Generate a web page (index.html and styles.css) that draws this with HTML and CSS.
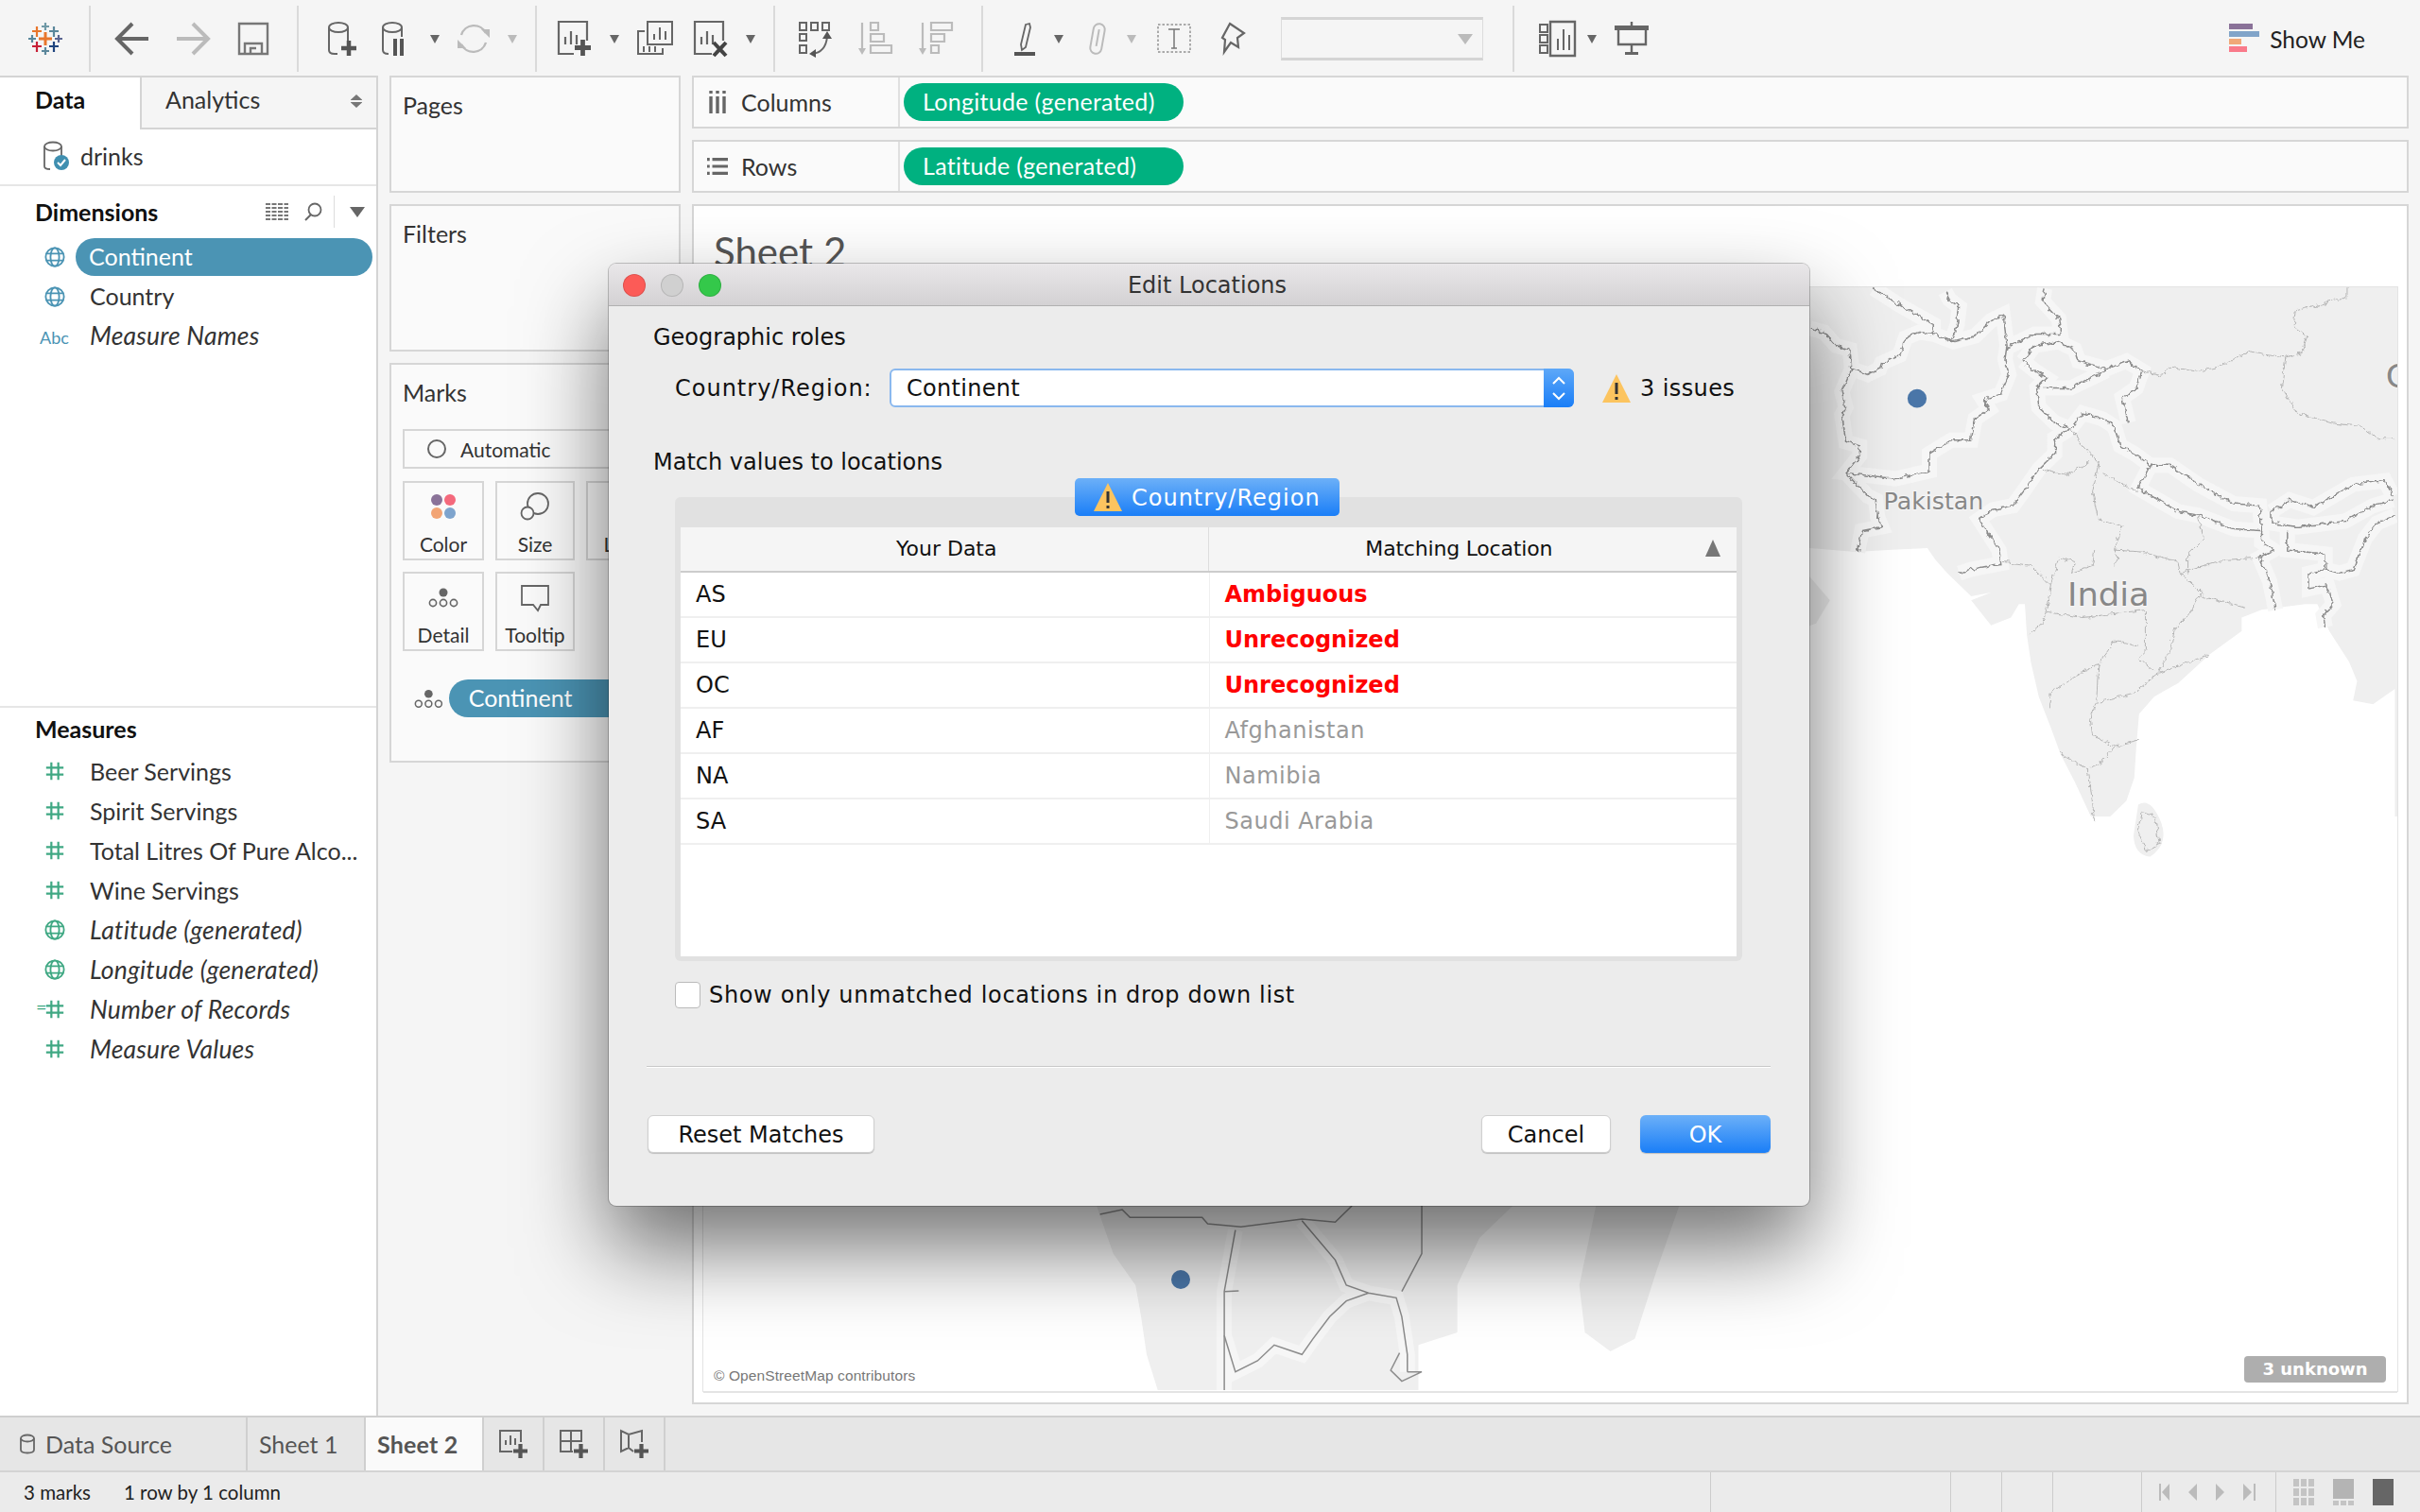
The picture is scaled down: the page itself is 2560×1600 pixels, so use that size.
FILE: index.html
```html
<!DOCTYPE html>
<html lang="en">
<head>
    <meta charset="utf-8">
    <title>Edit Locations</title>
    <link rel="stylesheet" href="styles.css">
</head>
<body>

<svg class="defs" width="0" height="0">
    <symbol id="globe" viewBox="0 0 24 24"><g fill="none" stroke="currentColor" stroke-width="2"><circle cx="12" cy="12" r="10.5"/><ellipse cx="12" cy="12" rx="5" ry="10.5"/><path d="M2 8h20M2 16h20"/></g></symbol>
    <symbol id="hash" viewBox="0 0 24 24"><path d="M8 2v20M16 2v20M2 8h20M2 16h20" fill="none" stroke="currentColor" stroke-width="2.4"/></symbol>
    <symbol id="warn" viewBox="0 0 32 32"><path d="M16 1L31 31H1z" fill="#fcc45f"/><path d="M16 10v12M16 25v3" stroke="#333" stroke-width="3" fill="none"/></symbol>
    <symbol id="detail" viewBox="0 0 32 22"><circle cx="16" cy="6" r="4.5" fill="#666"/><g fill="none" stroke="#666" stroke-width="1.6"><circle cx="5" cy="17" r="3.6"/><circle cx="16" cy="17" r="3.6"/><circle cx="27" cy="17" r="3.6"/></g></symbol>
    <symbol id="plus" viewBox="0 0 16 16"><path d="M8 0v16M0 8h16" stroke="#555" stroke-width="4.5" fill="none"/></symbol>
    <filter id="wiggle" filterUnits="userSpaceOnUse" x="-100" y="0" width="1700" height="1600">
        <feTurbulence type="fractalNoise" baseFrequency="0.07" numOctaves="2" seed="4"/>
        <feDisplacementMap in="SourceGraphic" scale="16" xChannelSelector="R" yChannelSelector="G"/>
    </filter>
</svg>

<header class="toolbar">
    <div class="tb-group g-logo">
        <svg class="icon" viewBox="0 0 40 40" fill="none" stroke-width="2.2">
            <path d="M20 13v14M13 20h14" stroke="#e8762c" stroke-width="3"/>
            <path d="M20 3v8M16 7h8" stroke="#7099a6"/>
            <path d="M11 7v11M6 12h10" stroke="#e8762c"/>
            <path d="M29 7v11M24 12h10" stroke="#5b879b"/>
            <path d="M6 16v8M2 20h8" stroke="#59879b"/>
            <path d="M34 16v8M30 20h8" stroke="#5b6591"/>
            <path d="M11 23v11M6 28h10" stroke="#c72037"/>
            <path d="M29 23v11M24 28h10" stroke="#1f447e"/>
            <path d="M20 29v8M16 33h8" stroke="#5b879b"/>
        </svg>
    </div>
    <div class="tb-group g-nav">
        <svg class="icon" viewBox="0 0 40 40"><path d="M37 20H5M20 4L4 20l16 16" fill="none" stroke="#666" stroke-width="4"/></svg>
        <svg class="icon" viewBox="0 0 40 40"><path d="M3 20h32M20 4l16 16-16 16" fill="none" stroke="#bbb" stroke-width="4"/></svg>
        <svg class="icon" viewBox="0 0 40 40"><g fill="none" stroke="#777" stroke-width="2.4"><path d="M5 4h30v32H5z"/><path d="M11 36V25h18v11M17 36v-6h6"/></g></svg>
    </div>
    <div class="tb-group g-data">
        <svg class="icon" viewBox="0 0 40 40"><g fill="none" stroke="#666" stroke-width="2"><ellipse cx="18" cy="8" rx="10" ry="5"/><path d="M8 8v24q0 4 6 4h3M28 8v16"/></g><use href="#plus" x="21" y="22" width="16" height="16"/></svg>
        <svg class="icon m3" viewBox="0 0 40 40"><g fill="none" stroke="#666" stroke-width="2"><ellipse cx="16" cy="8" rx="10" ry="5"/><path d="M6 8v24q0 4 6 4M26 8v10"/></g><path d="M19 20v18M26 20v18" stroke="#555" stroke-width="4"/></svg>
        <span class="caret"></span>
        <svg class="icon" viewBox="0 0 40 40"><g fill="none" stroke="#bbb" stroke-width="2.4"><path d="M7 16A14 14 0 0 1 33 14M33 24A14 14 0 0 1 7 26"/></g><path d="M28 10h9v9zM12 30H3v-9z" fill="#bbb"/></svg>
        <span class="caret off"></span>
    </div>
    <div class="tb-group g-sheet">
        <svg class="icon" viewBox="0 0 40 40"><g fill="none" stroke="#666" stroke-width="2.2"><path d="M20 36H4V2h30v20"/><path d="M11 26v-8M17 26V12M23 26v-10"/></g><use href="#plus" x="21" y="21" width="17" height="17"/></svg>
        <span class="caret"></span>
        <svg class="icon" viewBox="0 0 40 40"><g fill="none" stroke="#666" stroke-width="2"><path d="M12 26V2h26v24z"/><path d="M19 21v-6M25 21V8M31 21v-9"/><path d="M9 12H2v24h26v-6"/><path d="M8 34v-6M14 34v-6M20 34v-6"/></g></svg>
        <svg class="icon" viewBox="0 0 40 40"><g fill="none" stroke="#666" stroke-width="2.2"><path d="M22 36H4V2h30v20"/><path d="M11 26v-8M17 26V12M23 26v-10"/></g><path d="M24 24l13 14M37 24L24 38" stroke="#444" stroke-width="4"/></svg>
        <span class="caret"></span>
    </div>
    <div class="tb-group g-sort">
        <svg class="icon" viewBox="0 0 40 40"><g fill="none" stroke="#666" stroke-width="2"><path d="M3 3h7v8H3zM15 3h7v8h-7zM27 3h7v8h-7zM3 15h7v7H3zM3 27h7v8H3z"/><path d="M16 36c10-1 15-8 16-18"/></g><path d="M27 20l5-8 5 8zM13 36l7-5v9z" fill="#555"/></svg>
        <svg class="icon" viewBox="0 0 40 40"><g fill="none" stroke="#bbb" stroke-width="2.2"><path d="M5 3v30"/><path d="M14 3h8v8h-8zM14 15h14v8H14zM14 27h22v8H14z"/></g><path d="M1 30h8l-4 7z" fill="#bbb"/></svg>
        <svg class="icon" viewBox="0 0 40 40"><g fill="none" stroke="#bbb" stroke-width="2.2"><path d="M5 3v30"/><path d="M14 3h22v8H14zM14 15h14v8H14zM14 27h8v8h-8z"/></g><path d="M1 30h8l-4 7z" fill="#bbb"/></svg>
    </div>
    <div class="tb-group g-mark">
        <svg class="icon" viewBox="0 0 40 40"><path d="M21 5l4-1 1 4-5 21-4 3-1-6z" fill="none" stroke="#666" stroke-width="1.8"/><path d="M9 34h22v4H9z" fill="#555"/></svg>
        <span class="caret tight"></span>
        <svg class="icon m6" viewBox="0 0 40 40"><g transform="rotate(10 20 20)" fill="none" stroke="#bbb" stroke-width="2"><path d="M14 10a6 6 0 0 1 12 0v20a6 6 0 0 1-12 0z"/><path d="M20 10v18"/></g></svg>
        <span class="caret off tight"></span>
        <svg class="icon m10" viewBox="0 0 40 40"><path d="M3 5h34v29H3z" fill="none" stroke="#aaa" stroke-width="2" stroke-dasharray="2.500 2"/><path d="M14 10h12M20 10v20M17 30h6" fill="none" stroke="#777" stroke-width="1.500"/></svg>
        <svg class="icon m14" viewBox="0 0 40 40"><path d="M15 4l15 10-7 5 1 10-8-5-7 10 1-13-3-2z" fill="none" stroke="#666" stroke-width="2.2"/></svg>
        <div class="tb-select"><span class="caret off big"></span></div>
    </div>
    <div class="tb-group g-view">
        <svg class="icon" viewBox="0 0 40 40"><g fill="none" stroke="#666" stroke-width="2"><path d="M1 5h8v8H1zM1 16h8v8H1zM1 27h8v8H1z"/><path d="M12 2h26v36H12z" stroke-width="2.4"/><path d="M20 32V20M26 32V10M32 32V16"/></g></svg>
        <span class="caret tight"></span>
        <svg class="icon m17" viewBox="0 0 40 40"><path d="M2 6h36v5H2z" fill="#666"/><path d="M20 2v4M6 11v15h29V11M20 26v10" fill="none" stroke="#666" stroke-width="2.4"/><path d="M13 34h14v3H13z" fill="#666"/></svg>
        <div class="show-me">
            <div class="bars"><i class="b1"></i><i class="b2"></i><i class="b3"></i><i class="b4"></i></div>
            <span>Show Me</span>
        </div>
    </div>
</header>

<main class="main">
    <!-- left side, data pane -->
    <aside class="sidebar">
        <div class="side-tabs">
            <div class="tab-data">Data</div>
            <div class="tab-analytics">Analytics<span class="updown"></span></div>
        </div>
        <div class="source">
            <svg class="src-icon" viewBox="0 0 28 32"><g fill="none" stroke="#666" stroke-width="1.8"><ellipse cx="11" cy="6" rx="9" ry="4.5"/><path d="M2 6v21q0 3 6 3M20 6v10"/></g><circle cx="20" cy="23" r="8" fill="#3f8fb0"/><path d="M16 23l3 3 5-6" fill="none" stroke="#fff" stroke-width="2"/></svg>
            drinks
        </div>
        <section class="dims">
            <div class="side-head">
                <span>Dimensions</span>
                <div class="head-tools">
                    <svg width="24" height="18" viewBox="0 0 24 18"><path d="M0 1h24M0 5h24M0 9h24M0 13h24M0 17h24" stroke="#777" stroke-width="2" stroke-dasharray="5 1.5"/></svg>
                    <svg width="20" height="20" viewBox="0 0 20 20"><circle cx="12" cy="8" r="6.5" fill="none" stroke="#666" stroke-width="1.8"/><path d="M8 13l-6 6" stroke="#666" stroke-width="2"/></svg>
                    <span class="head-sep"></span>
                    <span class="caret big"></span>
                </div>
            </div>
            <div class="field dim"><svg class="f-icon"><use href="#globe"/></svg><span class="pill-sel">Continent</span></div>
            <div class="field dim"><svg class="f-icon"><use href="#globe"/></svg><span>Country</span></div>
            <div class="field dim"><span class="abc">Abc</span><em>Measure Names</em></div>
        </section>
        <section class="measures">
            <div class="side-head short">Measures</div>
            <div class="field mea"><svg class="f-icon"><use href="#hash"/></svg><span>Beer Servings</span></div>
            <div class="field mea"><svg class="f-icon"><use href="#hash"/></svg><span>Spirit Servings</span></div>
            <div class="field mea"><svg class="f-icon"><use href="#hash"/></svg><span>Total Litres Of Pure Alco...</span></div>
            <div class="field mea"><svg class="f-icon"><use href="#hash"/></svg><span>Wine Servings</span></div>
            <div class="field mea"><svg class="f-icon"><use href="#globe"/></svg><em>Latitude (generated)</em></div>
            <div class="field mea"><svg class="f-icon"><use href="#globe"/></svg><em>Longitude (generated)</em></div>
            <div class="field mea"><span class="calc">=</span><svg class="f-icon"><use href="#hash"/></svg><em>Number of Records</em></div>
            <div class="field mea"><svg class="f-icon"><use href="#hash"/></svg><em>Measure Values</em></div>
        </section>
    </aside>

    <!-- pages, filters, marks -->
    <div class="cards">
        <div class="card c-pages">Pages</div>
        <div class="card c-filters">Filters</div>
        <div class="card c-marks">
            Marks
            <div class="mark-type"><span class="ring"></span>Automatic</div>
            <div class="mark-grid">
                <div class="mark-btn">
                    <svg width="32" height="32" viewBox="0 0 32 32"><circle cx="9" cy="9" r="6" fill="#8a7298"/><circle cx="23" cy="9" r="6" fill="#f4697c"/><circle cx="9" cy="23" r="6" fill="#f2a474"/><circle cx="23" cy="23" r="6" fill="#7ea4cd"/></svg>
                    Color
                </div>
                <div class="mark-btn">
                    <svg width="32" height="32" viewBox="0 0 32 32"><g fill="none" stroke="#666" stroke-width="1.8"><circle cx="19" cy="13" r="11"/><circle cx="8" cy="23" r="6.5" fill="#fafafa"/></g></svg>
                    Size
                </div>
                <div class="mark-btn">
                    <span class="mark-blank"></span>
                    Label
                </div>
                <div class="mark-btn">
                    <svg width="32" height="32" viewBox="0 0 32 22"><use href="#detail"/></svg>
                    Detail
                </div>
                <div class="mark-btn">
                    <svg width="32" height="32" viewBox="0 0 32 32"><path d="M2 4h28v20h-8l-3 6-5-6H2z" fill="none" stroke="#666" stroke-width="1.8"/></svg>
                    Tooltip
                </div>
            </div>
            <div class="mark-field">
                <svg width="32" height="22"><use href="#detail"/></svg>
                <span class="pill-mark">Continent</span>
            </div>
        </div>
    </div>

    <!-- shelves and the sheet -->
    <div class="work">
        <div class="shelf">
            <div class="shelf-label">
                <svg width="22" height="24" viewBox="0 0 20 24"><path d="M3 0v3M10 0v3M17 0v3M3 6v18M10 6v18M17 6v18" stroke="#666" stroke-width="3.4" fill="none"/></svg>
                Columns
            </div>
            <span class="pill-green">Longitude (generated)</span>
        </div>
        <div class="shelf">
            <div class="shelf-label">
                <svg width="22" height="20" viewBox="0 0 24 20"><path d="M0 2h3M6 2h18M0 10h3M6 10h18M0 18h3M6 18h18" stroke="#666" stroke-width="3.4" fill="none"/></svg>
                Rows
            </div>
            <span class="pill-green">Latitude (generated)</span>
        </div>
        <div class="sheet">
            <div class="sheet-title">Sheet 2</div>
            <div class="map">
                <svg class="map-svg" viewBox="744 304 1792 1168">
                    <rect x="744" y="304" width="1792" height="560" fill="#efefef"/>
                    <!-- south asia, drawn in crop units -->
                    <g transform="translate(1900 280) scale(.4209 .4082)">
                        <path class="ocean" d="M-400 735L35 735 150 745 230 740 330 735 350 765 380 800 440 860 490 850 440 870 490 935 540 915 560 880 575 880 580 960 590 1030 610 1120 640 1200 665 1270 700 1340 745 1440 770 1450 830 1390 850 1330 855 1250 862 1165 900 1120 960 1085 1040 1010 1120 950 1120 915 1170 895 1280 880 1310 880 1340 950 1390 1030 1410 1080 1400 1130 1450 1140 1505 1100 1505 1600 -400 1600z"/>
                        <path class="land" d="M-60 800L35 810 85 870 50 930-60 970z"/>
                        <path class="land" d="M860 1400Q890 1380 915 1440 940 1500 890 1535 850 1530 848 1480z"/>
                        <g class="halo">
                            <path d="M195 62L260 105 345 155 345 180 395 200 450 185 490 145 520 130 530 210 525 245 535 285 515 335 470 350 485 375 450 400 440 455 390 455 335 490 335 535 250 555 125 540 160 495 160 470 125 460 115 390 125 370 115 330 140 270 135 220 100 210 70 175 35 165"/>
                            <path d="M140 270L180 285 210 270 215 255 260 235 275 190 310 175 345 180M125 540L180 600 200 610 205 655 215 680 165 690 155 745"/>
                            <path d="M690 425L650 450 650 490 610 530 570 590 545 625 495 635 460 660 485 700 510 740 515 775 440 790 410 800"/>
                            <path d="M375 70L385 90 410 110 405 155 390 200M530 215L600 180 665 180 660 140 620 95 625 62"/>
                            <path d="M570 250L600 210 660 200 700 220 710 250 780 270 830 250 870 275 855 320 820 345 835 410M690 425L720 385 770 400 800 420 815 470 850 490 890 520M570 250L600 275 630 295 605 320 610 370 650 410 690 425M620 320L690 320 780 275"/>
                            <path d="M890 520L860 580 960 640 1010 650 1100 685 1170 690 1165 625 1100 620 1010 570 940 520 890 520"/>
                            <path d="M1170 690L1170 720 1200 740 1165 760 1190 820 1205 895M1195 640L1240 610 1300 630 1400 570 1480 560 1500 600M1195 640L1195 670 1260 680 1380 665 1450 625 1500 610"/>
                            <path d="M1235 690L1235 740 1330 750 1330 790 1290 800 1290 840 1335 830 1350 880 1325 910 1330 940M1330 790L1365 800 1400 790 1430 710 1460 670 1505 650"/>
                        </g>
                        <g class="line-big wiggly">
                            <path d="M195 62L260 105 345 155 345 180 395 200 450 185 490 145 520 130 530 210 525 245 535 285 515 335 470 350 485 375 450 400 440 455 390 455 335 490 335 535 250 555 125 540 160 495 160 470 125 460 115 390 125 370 115 330 140 270 135 220 100 210 70 175 35 165"/>
                            <path d="M140 270L180 285 210 270 215 255 260 235 275 190 310 175 345 180M125 540L180 600 200 610 205 655 215 680 165 690 155 745"/>
                            <path d="M690 425L650 450 650 490 610 530 570 590 545 625 495 635 460 660 485 700 510 740 515 775 440 790 410 800"/>
                            <path d="M375 70L385 90 410 110 405 155 390 200M530 215L600 180 665 180 660 140 620 95 625 62"/>
                            <path d="M570 250L600 210 660 200 700 220 710 250 780 270 830 250 870 275 855 320 820 345 835 410M690 425L720 385 770 400 800 420 815 470 850 490 890 520M570 250L600 275 630 295 605 320 610 370 650 410 690 425M620 320L690 320 780 275"/>
                            <path d="M890 520L860 580 960 640 1010 650 1100 685 1170 690 1165 625 1100 620 1010 570 940 520 890 520"/>
                            <path d="M1170 690L1170 720 1200 740 1165 760 1190 820 1205 895M1195 640L1240 610 1300 630 1400 570 1480 560 1500 600M1195 640L1195 670 1260 680 1380 665 1450 625 1500 610"/>
                            <path d="M1235 690L1235 740 1330 750 1330 790 1290 800 1290 840 1335 830 1350 880 1325 910 1330 940M1330 790L1365 800 1400 790 1430 710 1460 670 1505 650"/>
                        </g>
                        <g class="line-thin wiggly">
                            <path d="M1385 62L1385 85 1255 120 1250 160 1285 185 1270 230 1230 240 1140 225 1060 265 1010 278 940 265 920 290 870 275M1230 240L1220 320 1260 385 1340 410 1420 420 1460 450 1505 450"/>
                            <path d="M690 425L720 470 760 515 745 590 760 660 820 680 800 740 810 760 800 780M620 530L680 545 740 510M770 540L860 590M800 740L870 745 960 770 965 800 1080 765 1165 760"/>
                            <path d="M520 770L590 780 640 830 630 890 620 930 585 960M640 830L660 760 700 770 690 800 745 780 750 740M630 900L720 915 880 895 880 1000 860 1020 900 1055M965 800L1020 850 990 900 950 950 940 1000 910 1060M1020 860L1130 890M1010 650L1025 710 985 750 985 800"/>
                            <path d="M765 1030L800 975 860 990M640 1110L690 1075 760 1035 755 1130 740 1180 745 1220 800 1250 765 1290 735 1310 660 1265M755 1135L850 1110 910 1060 1040 1010M635 1150L640 1110M800 1250L862 1235M735 1310L750 1440"/>
                            <path d="M870 1420L900 1430 915 1500 880 1520 860 1470z"/>
                        </g>
                        <circle cx="304" cy="347" r="24" class="dot"/>
                        <text x="220" y="635" class="lbl-sm">Pakistan</text>
                        <text x="682" y="885" class="lbl-lg">India</text>
                        <text x="1482" y="318" class="lbl-lg">C</text>
                    </g>
                    <!-- southern africa, crop units again -->
                    <g transform="translate(720 1260) scale(1.1737 .3333)">
                        <path class="land" d="M375 48L380 100 390 200 410 300 415 400 420 520 430 633 665 633 665 490 700 450 700 300 720 150 750 48z"/>
                        <path class="land" d="M825 48L810 300 815 450 838 510 860 470 880 250 900 48z"/>
                        <g class="halo">
                            <path d="M500 125L490 320 490 633M560 95L590 220 600 300 620 325 645 340 650 400 655 520 655 575M620 325L600 350 585 400 570 470 560 520 535 490 520 540 500 575 490 460"/>
                        </g>
                        <g class="line-big">
                            <path d="M378 75L398 60 405 85 470 85 475 105 505 115 560 90 590 100 605 48M500 125L490 320 490 633M490 320L503 318"/>
                            <path d="M560 95L590 220 600 300 620 325 645 340 650 400 655 520 655 575M668 48L668 200 650 320M620 325L600 350 585 400 570 470 560 520 535 490 520 540 500 575 490 460M648 515L640 570 650 605 668 575 655 575"/>
                        </g>
                    </g>
                    <circle cx="1249" cy="1354" r="10" class="dot"/>
                </svg>
                <span class="osm">© OpenStreetMap contributors</span>
                <span class="unknown">3 unknown</span>
            </div>
        </div>
    </div>
</main>

<footer>
    <div class="tabbar">
        <div class="tab t-source">
            <svg width="18" height="22" viewBox="0 0 18 22"><g fill="none" stroke="#666" stroke-width="1.8"><ellipse cx="9" cy="5" rx="7" ry="3.5"/><path d="M2 5v12q0 3.500 7 3.500t7-3.500V5"/></g></svg>
            Data Source
        </div>
        <div class="tab t-sheet">Sheet 1</div>
        <div class="tab t-sheet active">Sheet 2</div>
        <div class="tab t-new">
            <svg width="32" height="32" viewBox="0 0 32 32"><path d="M15 24H2V2h22v12M8 17v-5M13 17V7M18 17v-7" fill="none" stroke="#666" stroke-width="2"/><use href="#plus" x="16" y="16" width="15" height="15"/></svg>
        </div>
        <div class="tab t-new">
            <svg width="32" height="32" viewBox="0 0 32 32"><path d="M15 24H2V2h22v12M13 2v22M2 13h22" fill="none" stroke="#666" stroke-width="2"/><use href="#plus" x="16" y="16" width="15" height="15"/></svg>
        </div>
        <div class="tab t-new">
            <svg width="32" height="32" viewBox="0 0 32 32"><path d="M15 24L10 20 2 24V2l8 4 14-4v12M10 6v14" fill="none" stroke="#666" stroke-width="2"/><use href="#plus" x="16" y="16" width="15" height="15"/></svg>
        </div>
    </div>
    <div class="status">
        <span class="st-marks">3 marks</span>
        <span class="st-size">1 row by 1 column</span>
        <div class="st-cell w254"></div>
        <div class="st-cell w54"></div>
        <div class="st-cell w54"></div>
        <div class="st-cell w94"></div>
        <div class="st-cell w142">
            <svg width="106" height="18" viewBox="0 0 106 18"><g fill="#bbb"><path d="M0 0h2v18H0zM11 0v18L3 9zM40 0v18L31 9zM60 0v18l9-9zM89 0v18l9-9zM100 0h2v18h-2z"/></g></svg>
        </div>
        <div class="st-cell last">
            <div class="view-ic grid"><i></i><i></i><i></i><i></i><i></i><i></i><i></i><i></i><i></i></div>
            <div class="view-ic medium"><b></b><i></i><i></i><i></i></div>
            <div class="view-ic large"></div>
        </div>
    </div>
</footer>

<!-- the dialog floats above the whole window -->
<div class="dialog">
    <div class="dlg-title">
        <div class="lights"><i class="red"></i><i class="grey"></i><i class="green"></i></div>
        Edit Locations
    </div>
    <div class="dlg-body">
        <div class="dlg-head first">Geographic roles</div>
        <div class="role-row">
            <label class="role-label">Country/Region:</label>
            <div class="combo">
                <span>Continent</span>
                <div class="stepper">
                    <svg width="18" height="32" viewBox="0 0 18 32"><path d="M3 11l6-6 6 6M3 21l6 6 6-6" fill="none" stroke="#fff" stroke-width="2"/></svg>
                </div>
            </div>
            <svg class="warn-ic"><use href="#warn"/></svg>
            <span class="issues">3 issues</span>
        </div>
        <div class="dlg-head second">Match values to locations</div>
        <div class="group">
            <div class="role-tab"><svg class="warn-ic"><use href="#warn"/></svg><span>Country/Region</span></div>
            <div class="table">
                <div class="t-head">
                    <div class="th left">Your Data</div>
                    <div class="th right">Matching Location<span class="sort"></span></div>
                </div>
                <div class="t-row"><div class="td">AS</div><div class="td bad">Ambiguous</div></div>
                <div class="t-row"><div class="td">EU</div><div class="td bad">Unrecognized</div></div>
                <div class="t-row"><div class="td">OC</div><div class="td bad">Unrecognized</div></div>
                <div class="t-row"><div class="td">AF</div><div class="td ok">Afghanistan</div></div>
                <div class="t-row"><div class="td">NA</div><div class="td ok">Namibia</div></div>
                <div class="t-row"><div class="td">SA</div><div class="td ok">Saudi Arabia</div></div>
            </div>
        </div>
        <div class="check-row"><span class="check"></span>Show only unmatched locations in drop down list</div>
        <div class="dlg-foot">
            <button type="button" class="btn reset">Reset Matches</button>
            <button type="button" class="btn cancel">Cancel</button>
            <button type="button" class="btn primary">OK</button>
        </div>
    </div>
</div>

</body>
</html>
```

FILE: styles.css
```css
/* page */
* {
    box-sizing: border-box;
}

body {
    margin: 0;
    width: 2560px;
    height: 1600px;
    overflow: hidden;
    position: relative;
    display: flex;
    flex-direction: column;
    background: #f5f5f5;
    font-family: Lato, "Open Sans", sans-serif;
    font-size: 25px;
    color: #333;
}

em {
    font-size: 26.5px;
    letter-spacing: .2px;
}

.defs {
    position: absolute;
}

/* toolbar */
.toolbar {
    height: 80px;
    flex: none;
    display: flex;
    padding: 6px 0 4px;
}

.tb-group {
    display: flex;
    align-items: center;
    border-right: 2px solid #dadada;
    flex: none;
}

.g-logo { width: 96px; padding-left: 28px; }
.g-nav { width: 220px; padding-left: 24px; gap: 24px; }
.g-data { width: 252px; padding-left: 24px; gap: 16px; }
.g-sheet { width: 252px; padding-left: 19px; gap: 18px; }
.g-sort { width: 220px; padding-left: 23px; gap: 24px; }
.g-mark { width: 562px; padding-left: 24px; }
.g-view { flex: 1; padding-left: 26px; border-right: none; }

.icon {
    width: 40px;
    height: 40px;
    flex: none;
}

.m3 { margin-left: 3px; }
.m6 { margin-left: 16px; }
.m10 { margin-left: 20px; }
.m14 { margin-left: 24px; }
.m17 { margin-left: 17px; }

.caret {
    width: 0;
    height: 0;
    flex: none;
    border-left: 5px solid transparent;
    border-right: 5px solid transparent;
    border-top: 9px solid #666;
}

.caret.off { border-top-color: #bbb; }
.caret.tight { margin-left: 11px; }
.caret.big {
    border-left-width: 8px;
    border-right-width: 8px;
    border-top-width: 11px;
}

.tb-select {
    width: 214px;
    height: 46px;
    margin-left: 29px;
    border: 1px solid #dcdcdc;
    border-top: 3px solid #d4d4d4;
    border-bottom: 3px solid #d4d4d4;
    display: flex;
    align-items: center;
    justify-content: flex-end;
    padding-right: 10px;
}

.show-me {
    margin-left: auto;
    margin-right: 58px;
    display: flex;
    align-items: center;
    gap: 11px;
    color: #222;
    font-size: 24.5px;
}

.bars {
    width: 32px;
}

.bars i {
    display: block;
    height: 6px;
    margin-bottom: 2px;
}

.bars .b1 { width: 25px; background: #8a7298; }
.bars .b2 { width: 32px; background: #81a4c9; }
.bars .b3 { width: 13px; background: #f0a878; }
.bars .b4 { width: 19px; background: #f97a8a; }

/* main area */
.main {
    height: 1418px;
    flex: none;
    display: flex;
    padding-bottom: 12px;
}

.sidebar {
    width: 400px;
    height: 1418px;
    flex: none;
    background: #fff;
    border-top: 2px solid #d4d4d4;
    border-right: 2px solid #d4d4d4;
}

.side-tabs {
    height: 55px;
    display: flex;
}

.tab-data {
    width: 148px;
    padding: 8px 0 0 37px;
    font-weight: 700;
    color: #111;
}

.tab-analytics {
    flex: 1;
    position: relative;
    padding: 8px 0 0 25px;
    background: #f5f5f5;
    border-left: 2px solid #d4d4d4;
    border-bottom: 2px solid #d4d4d4;
}

.updown {
    position: absolute;
    right: 15px;
    top: 18px;
    width: 12px;
    height: 14px;
    background: linear-gradient(#777 0 45%, transparent 45% 55%, #777 55%);
    clip-path: polygon(50% 0, 100% 40%, 100% 45%, 0 45%, 0 40%, 0 55%, 100% 55%, 100% 60%, 50% 100%, 0 60%, 0 40%);
}

.source {
    height: 60px;
    display: flex;
    align-items: center;
    gap: 12px;
    padding: 0 0 2px 45px;
    border-bottom: 2px solid #e6e6e6;
}

.src-icon {
    width: 28px;
    height: 32px;
}

.dims {
    height: 552px;
    border-bottom: 2px solid #e6e6e6;
}

.side-head {
    height: 54px;
    display: flex;
    align-items: center;
    justify-content: space-between;
    padding: 0 12px 0 37px;
    font-weight: 700;
    color: #111;
}

.side-head.short {
    height: 46px;
    padding-bottom: 3px;
}

.head-tools {
    display: flex;
    align-items: center;
    gap: 16px;
}

.head-sep {
    width: 1px;
    height: 34px;
    margin-left: -4px;
    background: #ddd;
}

.field {
    height: 42px;
    display: flex;
    align-items: center;
    position: relative;
    padding-left: 95px;
    white-space: nowrap;
}

.field.dim {
    padding-bottom: 2px;
}

.f-icon {
    position: absolute;
    left: 47px;
    top: 10px;
    width: 22px;
    height: 22px;
}

.field.dim .f-icon { color: #4b94b4; }
.field.mea .f-icon { color: #3fa883; }

.abc {
    position: absolute;
    left: 42px;
    top: 11px;
    font-size: 18px;
    color: #4b94b4;
}

.calc {
    position: absolute;
    left: 38px;
    top: 6px;
    font-size: 20px;
    color: #3fa883;
}

.pill-sel {
    margin-left: -15px;
    width: 314px;
    height: 40px;
    margin-top: 2px;
    line-height: 38px;
    padding-left: 14px;
    border-radius: 20px;
    background: #4b94b4;
    color: #fff;
}

/* left cards */
.cards {
    width: 308px;
    margin-left: 12px;
    flex: none;
    display: flex;
    flex-direction: column;
    gap: 12px;
}

.card {
    background: #fafafa;
    border: 2px solid #d6d6d6;
    padding: 14px 12px;
}

.c-pages { height: 124px; }
.c-filters { height: 156px; }
.c-marks { height: 423px; }

.mark-type {
    height: 42px;
    margin-top: 24px;
    display: flex;
    align-items: center;
    border: 2px solid #d6d6d6;
    font-size: 21px;
    padding-left: 24px;
    gap: 15px;
}

.ring {
    width: 20px;
    height: 20px;
    border: 2px solid #666;
    border-radius: 50%;
}

.mark-grid {
    margin-top: 13px;
    display: grid;
    grid-template-columns: 86px 84px 86px;
    grid-auto-rows: 84px;
    gap: 12px 12px;
}

.mark-btn {
    border: 2px solid #d6d6d6;
    display: flex;
    flex-direction: column;
    align-items: center;
    gap: 11px;
    padding-top: 9px;
    font-size: 21px;
}

.mark-blank {
    height: 32px;
}

.mark-field {
    margin-top: 30px;
    margin-left: 12px;
    display: flex;
    align-items: center;
    gap: 6px;
}

.pill-mark {
    width: 240px;
    height: 40px;
    line-height: 38px;
    padding-left: 21px;
    border-radius: 20px;
    background: #4b94b4;
    color: #fff;
}

/* shelves */
.work {
    width: 1816px;
    margin-left: 12px;
    flex: none;
    display: flex;
    flex-direction: column;
    gap: 12px;
}

.shelf {
    height: 56px;
    flex: none;
    display: flex;
    align-items: center;
    background: #fafafa;
    border: 2px solid #d6d6d6;
}

.shelf-label {
    width: 218px;
    height: 100%;
    display: flex;
    align-items: center;
    gap: 14px;
    padding-left: 14px;
    border-right: 2px solid #e0e0e0;
}

.pill-green {
    width: 296px;
    height: 40px;
    line-height: 38px;
    margin-left: 4px;
    padding-left: 20px;
    border-radius: 20px;
    background: #00b180;
    color: #fff;
    letter-spacing: .3px;
}

/* sheet view */
.sheet {
    flex: 1;
    background: #fff;
    border: 2px solid #d6d6d6;
    padding: 0 10px 12px;
}

.sheet-title {
    height: 86px;
    padding: 23px 0 0 11px;
    font-size: 42px;
    color: #555;
}

.map {
    position: relative;
    width: 1792px;
    height: 1168px;
    box-shadow: 0 0 0 1px #e4e4e4, 0 2px 0 #e4e4e4;
}

.map-svg {
    display: block;
    width: 1792px;
    height: 1168px;
    background: #fff;
}

.ocean { fill: #fff; }
.land { fill: #efefef; }
.dot { fill: #4a76a8; }

.wiggly {
    filter: url(#wiggle);
}

.halo path {
    fill: none;
    stroke: #f6f6f6;
    stroke-width: 16px;
    vector-effect: non-scaling-stroke;
}

.line-big path {
    fill: none;
    stroke: #8c8c8c;
    stroke-width: 1.5px;
    vector-effect: non-scaling-stroke;
}

.line-thin path {
    fill: none;
    stroke: #b4b4b4;
    stroke-width: 1px;
    vector-effect: non-scaling-stroke;
}

.lbl-sm,
.lbl-lg {
    font-family: "DejaVu Sans", sans-serif;
    fill: #888;
    paint-order: stroke;
    stroke: #f4f4f4;
    stroke-width: 6px;
}

.lbl-sm { font-size: 60px; }
.lbl-lg { font-size: 84px; }

.osm {
    position: absolute;
    left: 11px;
    bottom: 7px;
    font-family: "Liberation Sans", sans-serif;
    font-size: 15.5px;
    letter-spacing: .1px;
    color: #777;
}

.unknown {
    position: absolute;
    right: 12px;
    bottom: 9px;
    width: 150px;
    height: 28px;
    line-height: 27px;
    text-align: center;
    border-radius: 4px;
    background: #aeaeae;
    color: #fff;
    font-family: "DejaVu Sans", sans-serif;
    font-size: 18px;
    font-weight: 700;
}

/* bottom tabs and status */
.tabbar {
    height: 60px;
    display: flex;
    background: #e6e6e6;
    border-top: 2px solid #cfcfcf;
    border-bottom: 2px solid #d4d4d4;
}

.tab {
    display: flex;
    align-items: center;
    border-right: 2px solid #cfcfcf;
    color: #555;
}

.t-source { width: 262px; padding-left: 20px; gap: 10px; }
.t-sheet { width: 125px; padding-left: 12px; }
.t-sheet.active { background: #fafafa; font-weight: 700; letter-spacing: .2px; }
.t-new { width: 64px; justify-content: center; }

.status {
    height: 42px;
    display: flex;
    align-items: center;
    background: #ebebeb;
    font-size: 20.5px;
    color: #222;
}

.st-marks { margin-left: 25px; }
.st-size { margin-left: 35px; margin-right: auto; }

.st-cell {
    height: 100%;
    border-left: 1px solid #ccc;
    display: flex;
    align-items: center;
    justify-content: center;
}

.w254 { width: 254px; }
.w54 { width: 54px; }
.w94 { width: 94px; }
.w142 { width: 142px; }

.st-cell.last {
    width: 153px;
    gap: 20px;
    padding-right: 10px;
}

.view-ic {
    width: 22px;
    height: 28px;
}

.view-ic.grid,
.view-ic.medium {
    display: grid;
    grid-template-columns: repeat(3, 1fr);
    gap: 2px;
}

.view-ic i {
    background: #c4c4c4;
}

.view-ic b {
    grid-column: 1 / 4;
    grid-row: span 3;
    background: #b4b4b4;
}

.view-ic.large {
    background: #666;
}

/* dialog */
.dialog {
    position: absolute;
    left: 644px;
    top: 279px;
    width: 1270px;
    height: 997px;
    border-radius: 8px;
    background: #ececec;
    box-shadow: 0 0 0 1px rgba(0, 0, 0, .22), 0 45px 90px rgba(0, 0, 0, .55);
    font-family: "DejaVu Sans", sans-serif;
    font-size: 24px;
    color: #111;
}

.dlg-title {
    position: relative;
    height: 45px;
    line-height: 47px;
    padding-right: 4px;
    text-align: center;
    color: #333;
    font-size: 24px;
    border-radius: 8px 8px 0 0;
    background: linear-gradient(#e9e7e9, #d3d1d3);
    border-bottom: 1px solid #b0b0b0;
}

.lights {
    position: absolute;
    left: 15px;
    top: 11px;
    display: flex;
    gap: 16px;
}

.lights i {
    width: 24px;
    height: 24px;
    border-radius: 50%;
    border: 1px solid rgba(0, 0, 0, .12);
}

.lights .red { background: #fc5b57; }
.lights .grey { background: #d0d0d0; }
.lights .green { background: #34c84a; }

.dlg-body {
    padding-left: 47px;
}

.dlg-head {
    height: 30px;
    line-height: 30px;
}

.dlg-head.first { margin-top: 18px; }
.dlg-head.second { margin-top: 43px; }

.role-row {
    margin-top: 18px;
    margin-left: 23px;
    height: 41px;
    display: flex;
    align-items: center;
}

.role-label {
    width: 227px;
    letter-spacing: 1px;
}

.issues {
    letter-spacing: .4px;
}

.combo {
    position: relative;
    width: 724px;
    height: 41px;
    display: flex;
    align-items: center;
    padding-left: 16px;
    background: #fff;
    border: 2px solid #8ab8ee;
    border-radius: 6px;
    letter-spacing: .3px;
}

.stepper {
    position: absolute;
    right: -2px;
    top: -2px;
    width: 32px;
    height: 41px;
    display: flex;
    align-items: center;
    justify-content: center;
    background: linear-gradient(#5ea8f8, #1a7ef7);
    border-radius: 0 6px 6px 0;
}

.warn-ic {
    width: 32px;
    height: 32px;
    flex: none;
}

.role-row .warn-ic {
    margin-left: 29px;
    margin-right: 9px;
}

.group {
    position: relative;
    margin-top: 22px;
    margin-left: 23px;
    width: 1129px;
    height: 491px;
    padding: 32px 6px 5px;
    background: #e1e1e1;
    border-radius: 6px;
}

.role-tab {
    position: absolute;
    left: 423px;
    top: -20px;
    width: 280px;
    height: 40px;
    display: flex;
    align-items: center;
    gap: 9px;
    padding-left: 19px;
    color: #fff;
    border-radius: 5px;
    background: linear-gradient(#6cb0f8, #1a7ef7);
    letter-spacing: 1px;
}

.role-tab span {
    padding-top: 2px;
}

.table {
    height: 454px;
    background: #fff;
}

.t-head {
    height: 48px;
    display: flex;
    background: #f5f5f5;
    border-bottom: 2px solid #ccc;
    font-size: 22px;
}

.th {
    width: 559px;
    display: flex;
    align-items: center;
    justify-content: center;
    padding-bottom: 2px;
}

.th.left {
    padding-left: 4px;
}

.th.right {
    position: relative;
    padding-right: 30px;
    border-left: 1px solid #ddd;
    letter-spacing: -.2px;
}

.sort {
    position: absolute;
    right: 17px;
    top: 13px;
    width: 0;
    height: 0;
    border-left: 8px solid transparent;
    border-right: 8px solid transparent;
    border-bottom: 18px solid #777;
}

.t-row {
    height: 48px;
    display: flex;
    border-bottom: 2px solid #efefef;
}

.td {
    width: 559px;
    display: flex;
    align-items: center;
    padding-left: 16px;
}

.td + .td {
    border-left: 1px solid #efefef;
}

.td.bad {
    color: #f00;
    font-weight: 700;
}

.td.ok {
    color: #999;
    letter-spacing: .5px;
}

.check-row {
    margin-top: 21px;
    margin-left: 23px;
    height: 28px;
    display: flex;
    align-items: center;
    gap: 9px;
    padding-top: 1px;
    letter-spacing: .65px;
}

.check {
    width: 27px;
    height: 28px;
    background: #fff;
    border: 1px solid #bbb;
    border-radius: 4px;
}

.dlg-foot {
    margin-top: 62px;
    margin-left: -7px;
    width: 1189px;
    display: flex;
    align-items: flex-start;
    padding-top: 51px;
    border-top: 1px solid #c8c8c8;
    box-shadow: inset 0 1px 0 #fff;
}

.btn {
    height: 40px;
    padding: 2px 0 0;
    border: 1px solid #d0d0d0;
    border-radius: 6px;
    background: #fff;
    box-shadow: 0 1px 1px rgba(0, 0, 0, .2);
    font-family: "DejaVu Sans", sans-serif;
    font-size: 24px;
    color: #111;
}

.reset { width: 240px; margin-left: 1px; }
.cancel { width: 137px; margin-left: auto; }

.primary {
    width: 138px;
    margin-left: 31px;
    color: #fff;
    border: none;
    background: linear-gradient(#6cb0f8, #1a7ef7);
}
```
